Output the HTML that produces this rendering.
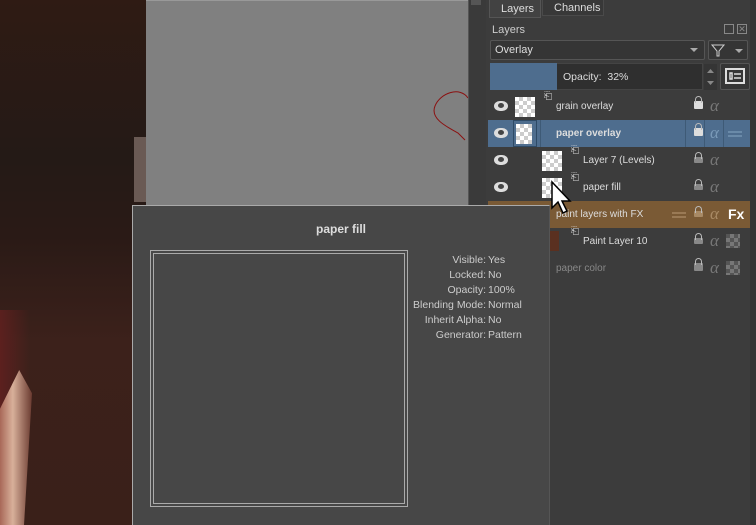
<!DOCTYPE html>
<html><head><style>
*{margin:0;padding:0;box-sizing:border-box}
body{width:756px;height:525px;overflow:hidden;position:relative;background:#333;font-family:"Liberation Sans","DejaVu Sans",sans-serif;font-size:10px;color:#ddd}
.a{position:absolute}
.row{position:absolute;left:488px;width:262px;height:27px}
.eye{position:absolute;left:6px;top:8px;width:14px;height:10px;border-radius:50%/60%;background:#ddd}
.eye:after{content:"";position:absolute;left:4px;top:2px;width:6px;height:5px;border-radius:50%;background:#444}
.th{position:absolute;top:4px;width:20px;height:20px;background-color:#fff;background-image:linear-gradient(45deg,#ccc 25%,transparent 25%,transparent 75%,#ccc 75%),linear-gradient(45deg,#ccc 25%,transparent 25%,transparent 75%,#ccc 75%);background-size:8px 8px;background-position:0 0,4px 4px}
.nm{position:absolute;top:8px;font-size:10px;color:#ddd}
.lk{position:absolute;left:206px;top:8px;width:9px;height:8px;background:#bbb;border-radius:1px}
.lk:before{content:"";position:absolute;left:1px;top:-5px;width:5px;height:6px;border:1.5px solid #bbb;border-bottom:none;border-radius:4px 4px 0 0}
.al{position:absolute;left:222px;top:3px;font-family:"Liberation Serif",serif;font-style:italic;font-size:17px;color:#777}
.sep{position:absolute;top:0;width:1px;height:27px;background:#2e2e2e}
.ck{position:absolute;left:238px;top:6px;width:14px;height:14px;background-image:linear-gradient(45deg,#777 25%,transparent 25%,transparent 75%,#777 75%),linear-gradient(45deg,#777 25%,transparent 25%,transparent 75%,#777 75%);background-size:8px 8px;background-position:0 0,4px 4px;background-color:#555}
.tl{position:absolute;text-align:right;color:#ccc;font-size:10.5px;width:98px;left:0}
.tv{position:absolute;color:#ccc;font-size:10.5px}
</style></head><body>
<div class="a" style="left:0;top:0;width:146px;height:525px;background:linear-gradient(180deg,#2f1b14 0%,#241a16 30%,#2a1a16 45%,#3c211b 65%,#3a2019 100%)"></div>
<div class="a" style="left:0;top:310px;width:30px;height:100px;background:linear-gradient(90deg,#6a2020,transparent);opacity:.7"></div>
<div class="a" style="left:0;top:370px;width:32px;height:155px;background:linear-gradient(90deg,#a86858,#d8b09a 40%,#6a3a30);clip-path:polygon(60% 0,100% 15%,75% 100%,0 100%,0 25%)"></div>
<div class="a" style="left:134px;top:137px;width:12px;height:65px;background:#6a5a54"></div>
<div class="a" style="left:146px;top:0;width:322px;height:205px;background:#808080;border-top:1px solid #999"></div>
<svg class="a" style="left:430px;top:88px" width="40" height="55"><path d="M38 10 C30 -2 10 5 5 18 C0 30 15 38 28 45 L35 52" fill="none" stroke="#8b1010" stroke-width="1"/></svg>
<div class="a" style="left:468px;top:0;width:18px;height:205px;background:#3a3a3a;border-left:1px solid #555"></div>
<div class="a" style="left:471px;top:0;width:10px;height:5px;background:#555"></div>
<div class="a" style="left:486px;top:0;width:270px;height:525px;background:#3c3c3c"></div>
<div class="a" style="left:750px;top:0;width:6px;height:525px;background:#343434"></div>
<div class="a" style="left:489px;top:0;width:52px;height:18px;background:#424242;border:1px solid #555;border-top:none;color:#ddd;padding:3px 0 0 11px;font-size:11px">Layers</div>
<div class="a" style="left:542px;top:0;width:62px;height:16px;background:#383838;border:1px solid #4a4a4a;border-top:none;color:#ddd;padding:2px 0 0 11px;font-size:11px">Channels</div>
<div class="a" style="left:492px;top:24px;color:#ccc;font-size:11px">Layers</div>
<div class="a" style="left:724px;top:24px;width:10px;height:10px;border:1px solid #888"></div>
<div class="a" style="left:737px;top:24px;width:10px;height:10px;border:1px solid #888;color:#888;font-size:9px;line-height:8px;text-align:center">✕</div>
<div class="a" style="left:490px;top:40px;width:215px;height:20px;background:#353535;border:1px solid #555;border-radius:2px;color:#ddd;padding:3px 4px;font-size:11px">Overlay<span style="position:absolute;right:6px;top:7px;border:4px solid transparent;border-top:4px solid #aaa"></span></div>
<div class="a" style="left:708px;top:40px;width:40px;height:20px;background:#353535;border:1px solid #555;border-radius:2px"><svg width="38" height="18"><path d="M3 4 H15 L10 10 V15 L8 15 V10 Z" fill="none" stroke="#ccc"/><path d="M26 8 h8 l-4 4z" fill="#aaa"/></svg></div>
<div class="a" style="left:490px;top:63px;width:213px;height:27px;background:#2f2f2f;border:1px solid #444"></div>
<div class="a" style="left:490px;top:63px;width:67px;height:27px;background:#4e6d8e"></div>
<div class="a" style="left:563px;top:71px;color:#ddd;font-size:10.5px">Opacity:&nbsp; 32%</div>
<div class="a" style="left:704px;top:64px;width:13px;height:26px;background:#353535"><svg width="13" height="26"><path d="M3 9 l3.5-4 3.5 4z M3 17 l3.5 4 3.5-4z" fill="#888"/></svg></div>
<div class="a" style="left:720px;top:63px;width:30px;height:27px;background:#353535;border:1px solid #555;border-radius:2px"><svg width="28" height="25"><rect x="5" y="5" width="18" height="14" fill="none" stroke="#ddd" stroke-width="2"/><path d="M9 9h2v6h-2z M13 10h7 M13 14h7" stroke="#ddd" stroke-width="1.5"/></svg></div>

<div class="row" style="top:93px"><div class="eye"></div><div class="th" style="left:27px"></div><div class="nm" style="left:56px;top:-2px">⎗</div><div class="nm" style="left:68px">grain overlay</div><div class="lk" style="background:#ddd"></div><div class="al">α</div></div>
<div class="row" style="top:120px;background:#4e6d8e"><div class="eye" style="background:#ddd"></div><div class="a" style="left:25px;top:0;width:24px;height:27px;border:1px solid #2e4a66"></div><div class="th" style="left:28px;width:16px"></div><div class="sep" style="left:52px;background:#3e5a76"></div><div class="nm" style="left:68px;font-weight:bold">paper overlay</div><div class="sep" style="left:197px;background:#3e5a76"></div><div class="lk" style="background:#ddd"></div><div class="sep" style="left:216px;background:#3e5a76"></div><div class="al" style="color:#7a9ab8">α</div><div class="sep" style="left:235px;background:#3e5a76"></div><div class="a" style="left:240px;top:11px;width:14px;height:6px;border-top:2px solid #6a8aa8;border-bottom:2px solid #6a8aa8"></div></div>
<div class="row" style="top:147px"><div class="eye"></div><div class="th" style="left:54px"></div><div class="nm" style="left:83px;top:-2px">⎗</div><div class="nm" style="left:95px">Layer 7 (Levels)</div><div class="lk" style="background:#888;top:10px;height:6px"></div><div class="al">α</div></div>
<div class="row" style="top:174px"><div class="eye"></div><div class="th" style="left:54px"></div><div class="nm" style="left:83px;top:-2px">⎗</div><div class="nm" style="left:95px">paper fill</div><div class="lk" style="background:#888;top:10px;height:6px"></div><div class="al">α</div></div>
<div class="row" style="top:201px;background:#7a5a35"><div class="nm" style="left:68px">paint layers with FX</div><div class="a" style="left:184px;top:11px;width:14px;height:6px;border-top:2px solid #9a7a55;border-bottom:2px solid #9a7a55"></div><div class="lk" style="background:#a88a65;top:10px;height:6px"></div><div class="al" style="color:#a88a65">α</div><div class="a" style="left:240px;top:5px;color:#fff;font-size:14px;font-weight:bold">Fx</div></div>
<div class="row" style="top:228px"><div class="a" style="left:61px;top:3px;width:10px;height:20px;background:#5a3020"></div><div class="nm" style="left:83px;top:-2px">⎗</div><div class="nm" style="left:95px">Paint Layer 10</div><div class="lk" style="background:#888;top:10px;height:6px"></div><div class="al">α</div><div class="ck"></div></div>
<div class="row" style="top:255px"><div class="nm" style="left:68px;color:#888">paper color</div><div class="lk" style="background:#888"></div><div class="al">α</div><div class="ck"></div></div>

<div class="a" style="left:132px;top:205px;width:418px;height:320px;background:#474747;border:1px solid #aaa;border-right:1px solid #555;border-bottom:none"></div>
<div class="a" style="left:132px;top:222px;width:418px;text-align:center;font-weight:bold;font-size:12px;color:#ddd">paper fill</div>
<div class="a" style="left:150px;top:250px;width:258px;height:257px;border:1px solid #aaa"></div>
<div class="a" style="left:153px;top:253px;width:252px;height:251px;border:1px solid #aaa"></div>
<div class="a" style="left:388px;top:254px;width:160px;height:100px">
<div class="tl" style="top:0">Visible:</div><div class="tv" style="top:0;left:100px">Yes</div>
<div class="tl" style="top:15px">Locked:</div><div class="tv" style="top:15px;left:100px">No</div>
<div class="tl" style="top:30px">Opacity:</div><div class="tv" style="top:30px;left:100px">100%</div>
<div class="tl" style="top:45px">Blending Mode:</div><div class="tv" style="top:45px;left:100px">Normal</div>
<div class="tl" style="top:60px">Inherit Alpha:</div><div class="tv" style="top:60px;left:100px">No</div>
<div class="tl" style="top:75px">Generator:</div><div class="tv" style="top:75px;left:100px">Pattern</div>
</div>
<svg class="a" style="left:550px;top:180px" width="22" height="36"><path d="M2 2 V28 L8 22 L13 33 L17 31 L12 21 H20 Z" fill="#fff" stroke="#000" stroke-width="1.5"/></svg>
</body></html>
